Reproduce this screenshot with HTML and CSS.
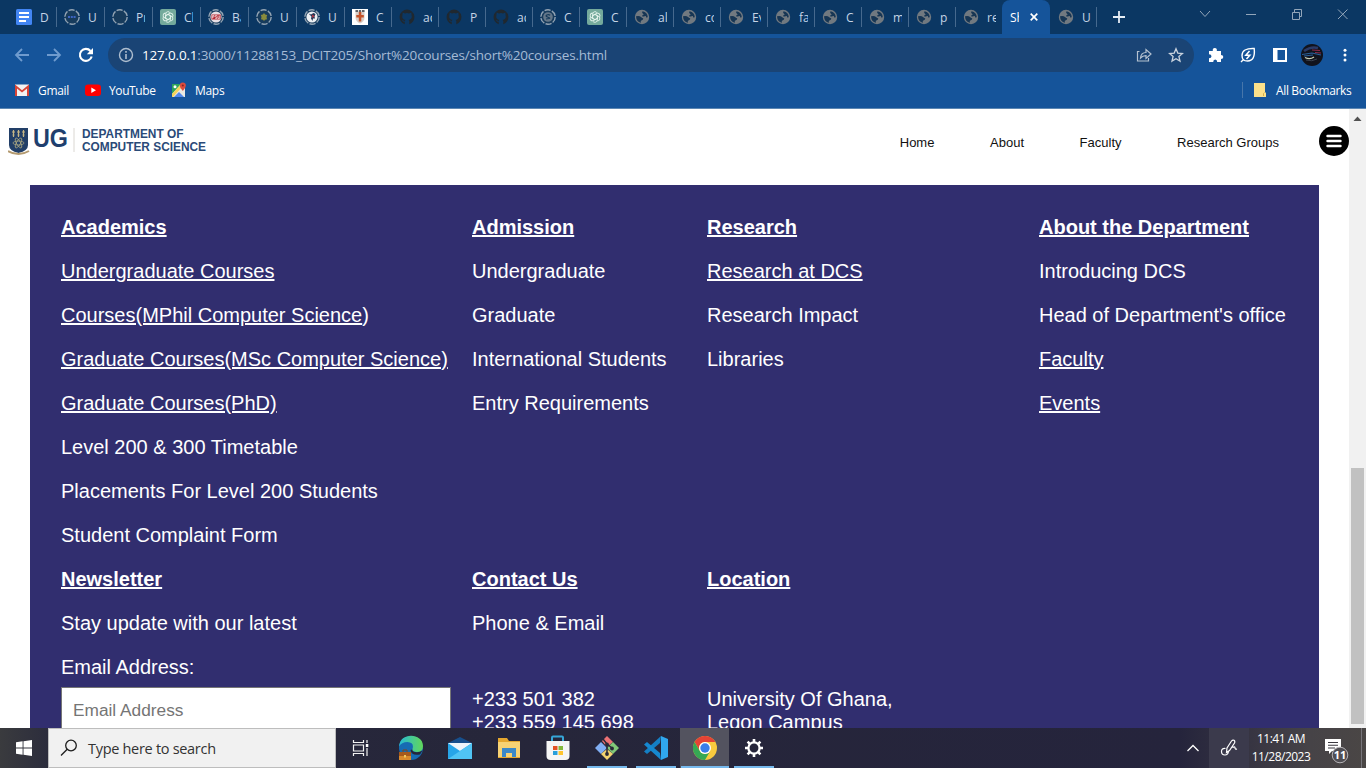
FILE: index.html
```
<!DOCTYPE html>
<html lang="en">
<head>
<meta charset="utf-8">
<title>Short courses</title>
<link rel="stylesheet" href="styles.css">
</head>
<body>
<svg class="defs" width="0" height="0" aria-hidden="true">
  <symbol id="globe" viewBox="0 0 16 16"><circle cx="8" cy="8" r="7.2" fill="#717980"/><path d="M2 7.300Q5.500 6.600 7 8t2.200 1.300Q9.500 11 7.800 11.300T7 13.800Q2.300 13 2 7.300ZM8.500 2.200Q7.500 4 9 4.800T8 6.700Q8.500 8 10.500 7.300T12 8.600L13.800 8.200Q13.500 3.200 8.500 2.200Z" fill="#173654"/></symbol>
  <symbol id="cat" viewBox="0 0 16 16"><path d="M8 .6A7.5 7.5 0 0 0 5.700 15.200V12.600C3.800 13 3.300 11.800 2.700 11.100L4.200 11.500 5.800 12 6.300 10.900C3.600 10.400 2.800 8.600 3.400 6.500L3.700 3.500 6 4.400Q8 3.800 10 4.400L12.300 3.500 12.600 6.500C13.200 8.600 12.400 10.400 9.700 10.900L10.300 12V15.200A7.500 7.500 0 0 0 8 .6Z" fill="#20282f"/></symbol>
  <symbol id="ring" viewBox="0 0 16 16"><circle cx="8" cy="8" r="7.200" fill="#173b5c" stroke="#92a3b3" stroke-width="1.400" stroke-dasharray="6.200 1.340"/></symbol>
  <symbol id="gpt" viewBox="0 0 16 16"><rect width="16" height="16" rx="2" fill="#74aa9c"/><g fill="none" stroke="#e5f4ed" stroke-width=".9"><path id="petal" d="M5.600 9.300V5.200a2.500 2.500 0 0 1 4.700-1.200M5.600 9.300L8 10.700"/><use href="#petal" transform="rotate(60 8 8)"/><use href="#petal" transform="rotate(120 8 8)"/><use href="#petal" transform="rotate(180 8 8)"/><use href="#petal" transform="rotate(240 8 8)"/><use href="#petal" transform="rotate(300 8 8)"/></g></symbol>
</svg>

<header class="chrome">
  <div class="tabs">
    <div class="tab wide first"><svg class="fav" viewBox="0 0 16 16"><rect width="16" height="16" rx="1.500" fill="#4285f4"/><path d="M3 4h10M3 8h10M3 12h7" stroke="#fff" stroke-width="1.800"/></svg><span>D</span></div>
    <div class="tab wide"><svg class="fav" viewBox="0 0 16 16"><use href="#ring"/><path d="M4 8h8" stroke="#3d65c4" stroke-width="2" stroke-dasharray="2 .8"/></svg><span>U</span></div>
    <div class="tab wide"><svg class="fav"><use href="#ring"/></svg><span>Pr</span></div>
    <div class="tab wide"><svg class="fav"><use href="#gpt"/></svg><span>Ch</span></div>
    <div class="tab wide"><svg class="fav" viewBox="0 0 16 16"><use href="#ring"/><circle cx="8" cy="8" r="5.600" fill="#e9dfe4"/><path d="M3.500 5.500h9.200v5H3.500z" fill="#b62934"/><path d="M4.500 9.500v-3h1.500v1.500H4.500M9 6.500H7.300V8h1.500v1.500H7.200M10 6.500v3h1.600v-3" fill="none" stroke="#fff" stroke-width=".6"/></svg><span>Ba</span></div>
    <div class="tab wide"><svg class="fav" viewBox="0 0 16 16"><use href="#ring"/><path d="M8 4l1.200 1.600 2 .3-.7 2 .5 2.300-2 .5L8 12l-1-1.300-2-.5.5-2.300-.7-2 2-.3z" fill="#898b3c"/></svg><span>U</span></div>
    <div class="tab wide"><svg class="fav" viewBox="0 0 16 16"><use href="#ring"/><circle cx="8" cy="8" r="5.600" fill="#edf0f4"/><path d="M4.500 4.500l2.500 1L9.500 4l2 1-1 2.500.5 2L9 9.500 8.500 12 7 9.500l.5-2z" fill="#243654"/><path d="M8 5.500l2.500 1.500-2 2z" fill="#c93643"/></svg><span>U</span></div>
    <div class="tab"><svg class="fav" viewBox="0 0 16 16"><path d="M0 0h16v16H0z" fill="#fff"/><path d="M3.500 1.500h9v7q0 4-4.500 6-4.500-2-4.500-6z" fill="#d9cfc8"/><path d="M6.800 3h2.500v3h2.500v2.600H9.300v3.800H6.800V8.600H4.300V6h2.500z" fill="#c45229"/><path d="M3.500 1.200h2.500v1.500H3.500zM7 1.200h2v1.500H7zM10 1.200h2.500v1.500H10z" fill="#333b44"/></svg><span>C</span></div>
    <div class="tab"><svg class="fav"><use href="#cat"/></svg><span>ac</span></div>
    <div class="tab"><svg class="fav"><use href="#cat"/></svg><span>P</span></div>
    <div class="tab"><svg class="fav"><use href="#cat"/></svg><span>ac</span></div>
    <div class="tab"><svg class="fav" viewBox="0 0 16 16"><use href="#ring"/><circle cx="8" cy="8" r="4.800" fill="#647789"/><path d="M10.200 6.200Q8.500 5 6.800 6T7.500 8t2.300 1.200T6 10" fill="none" stroke="#173b5c" stroke-width="1.200"/></svg><span>C</span></div>
    <div class="tab"><svg class="fav"><use href="#gpt"/></svg><span>C</span></div>
    <div class="tab"><svg class="fav"><use href="#globe"/></svg><span>al</span></div>
    <div class="tab"><svg class="fav"><use href="#globe"/></svg><span>co</span></div>
    <div class="tab"><svg class="fav"><use href="#globe"/></svg><span>Ev</span></div>
    <div class="tab"><svg class="fav"><use href="#globe"/></svg><span>fa</span></div>
    <div class="tab"><svg class="fav"><use href="#globe"/></svg><span>C</span></div>
    <div class="tab"><svg class="fav"><use href="#globe"/></svg><span>m</span></div>
    <div class="tab"><svg class="fav"><use href="#globe"/></svg><span>p</span></div>
    <div class="tab"><svg class="fav"><use href="#globe"/></svg><span>re</span></div>
    <div class="tab active"><span>Sh</span><svg width="8" height="8" viewBox="0 0 8 8"><path d="M.7.7l6.600 6.600M7.300.7L.7 7.300" stroke="#fff" stroke-width="1.700"/></svg></div>
    <div class="tab last"><svg class="fav"><use href="#globe"/></svg><span>U</span></div>
    <svg class="plus" width="12" height="12" viewBox="0 0 12 12"><path d="M6 0v12M0 6h12" stroke="#e6edf5" stroke-width="1.800"/></svg>
    <svg class="winbtns" width="150" height="12" viewBox="0 0 150 12" fill="none" stroke="#93a6ba"><path d="M1 3l5 5.500L11 3M47 6.500h10M93.500 4.500h7v7h-7zM95.500 4v-2.500h7v7h-2M139 1.500l9.500 9.500M148.500 1.500L139 11"/></svg>
  </div>
  <div class="toolbar">
    <svg class="navbtns" width="82" height="18" viewBox="0 0 82 18" fill="none" stroke-width="1.800"><path d="M15 9H2M8 3L2 9l6 6M33 9h13M40 3l6 6-6 6" stroke="#6f9bce"/><path d="M76.500 5A6 6 0 1 0 77.700 10.500" stroke="#fff" stroke-width="2.100"/><path d="M79 2v6.200h-6.200z" fill="#fff"/></svg>
    <div class="omnibox">
      <svg width="16" height="16" viewBox="0 0 16 16"><circle cx="8" cy="8" r="6.500" fill="none" stroke="#aebdce" stroke-width="1.400"/><path d="M8 7v5M8 4v1.700" stroke="#aebdce" stroke-width="1.600"/></svg>
      <div class="url"><b>127.0.0.1</b>:3000/11288153_DCIT205/Short%20courses/short%20courses.html</div>
      <svg class="share" width="16" height="16" viewBox="0 0 16 16" fill="none" stroke="#b4c1d0" stroke-width="1.200"><path d="M3.500 4.500H1.500v9.500h11v-3M4.500 11Q5 5.500 10 5.500V2.500L15 7l-5 4.500V8.700Q6.500 8.700 4.500 11z"/></svg>
      <svg width="16" height="16" viewBox="0 0 16 16" fill="none" stroke="#c9d2dd" stroke-width="1.300"><path d="M8 1.800l1.800 4.300 4.600.4-3.500 3 1.100 4.600L8 11.700l-4 2.400 1.100-4.600-3.500-3 4.600-.4z"/></svg>
    </div>
    <svg class="ext" width="16" height="16" viewBox="0 0 16 16"><path d="M1 4h3.800Q4.300 1 6.800 1T8.800 4H13v4q2.300 0 2.300 2T13 12v3H9.200q0-2.500-2-2.500t-2 2.500H1v-3.800q2.500 0 2.500-2T1 7.200z" fill="#fff"/></svg>
    <svg class="ext" width="16" height="16" viewBox="0 0 16 16" fill="none" stroke="#fff" stroke-width="1.400"><path d="M14.200 1.500Q15.500 14 7.500 14 2 14 2 8.500 2 1 14.200 1.500zM1 15l2-2"/><path d="M9.500 4L5.800 8.300h4L6.500 12" stroke-width="1.500"/></svg>
    <svg class="ext" width="16" height="16" viewBox="0 0 16 16"><path d="M1 1h14v14H1zM5.500 3v10H13V3z" fill="#fff" fill-rule="evenodd"/></svg>
    <svg class="avatar" width="22" height="22" viewBox="0 0 22 22"><circle cx="11" cy="11" r="11" fill="#11131c"/><path d="M3 7q7-5 14-3" stroke="#2b3a66" stroke-width="2.500" fill="none"/><path d="M11 6l8 .5M14 8.500l6 .5" stroke="#8e2c4b" stroke-width="1.200"/><path d="M1 10.500l10-1.500 9 2M3 12l9-1" stroke="#2a5f99" stroke-width="1.200" fill="none"/><path d="M4 13.500q5 2.500 9-.5" stroke="#c6cdb2" stroke-width="1.300" fill="none"/><path d="M5 16q6 2 11-1" stroke="#3b4351" fill="none"/></svg>
    <svg class="kebab" width="4" height="16" viewBox="0 0 4 16" fill="#fff"><circle cx="2" cy="3.200" r="1.500"/><circle cx="2" cy="8" r="1.500"/><circle cx="2" cy="13" r="1.500"/></svg>
  </div>
  <div class="bookmarks">
    <svg width="16" height="16" viewBox="0 0 16 16"><path d="M1 2.500h14v11.500H1z" fill="#f2f2f2"/><path d="M1 14V2.500l7 5.700 7-5.700V14h-2V6.500L8 10.500 3 6.500V14z" fill="#d84437"/></svg><span class="gmail">Gmail</span>
    <svg width="16" height="16" viewBox="0 0 16 16"><rect y="2.500" width="16" height="11.500" rx="3" fill="#f00"/><path d="M6.300 5.500v5.400L11 8.200z" fill="#fff"/></svg><span class="yt">YouTube</span>
    <svg width="16" height="16" viewBox="0 0 16 16"><path d="M1 2h13v13H1z" fill="#e9e9e2"/><path d="M1 2h9L1 12z" fill="#30a35a"/><path d="M1 12l9-10 2 2L2 15H1z" fill="#f7d45a"/><path d="M3 15l5-5 5 5z" fill="#4e87ed"/><circle cx="4" cy="4.800" r="1.500" fill="#fff"/><path d="M11.800 9Q8.800 5.500 8.800 3.500a3 3 0 0 1 6 0Q14.800 5.500 11.800 9z" fill="#dd4b3e"/><circle cx="11.800" cy="3.500" r="1" fill="#842620"/></svg><span class="maps">Maps</span>
    <i class="divider"></i>
    <svg class="folder" width="12" height="14" viewBox="0 0 12 14"><path d="M0 0h11v9l1 1v4H0z" fill="#fbe08a"/><path d="M9.500 13v-2.500l1-1" stroke="#d4ae48" fill="none"/></svg><span class="allb">All Bookmarks</span>
  </div>
</header>

<div class="viewport">
  <main class="page">
    <div class="sitebar">
      <svg class="logo" width="200" height="30" viewBox="0 0 200 30">
        <path d="M1 0h19v17q0 6-9.500 8Q1 23 1 17z" fill="#223f68"/>
        <path d="M5.500 2v7M10.500 2v7M15.500 2v7M4 4h3M9 4h3M14 4h3M4.500 7h2M9.500 7h2M14.500 7h2" stroke="#c7b786" stroke-width="1.200"/>
        <g fill="none" stroke="#aaa681" stroke-width=".8"><ellipse cx="10.500" cy="15" rx="5.500" ry="2"/><ellipse cx="10.500" cy="15" rx="5.500" ry="2" transform="rotate(60 10.500 15)"/><ellipse cx="10.500" cy="15" rx="5.500" ry="2" transform="rotate(120 10.500 15)"/></g>
        <path d="M0 23q5 3 10.500 3T21 23" stroke="#b39a70" stroke-width="2" fill="none"/>
        <text x="25" y="18.500" class="ug" textLength="35" lengthAdjust="spacingAndGlyphs">UG</text>
        <path d="M66 0v24" stroke="#dad7d2"/>
        <text x="74" y="9.500" class="dept" textLength="101.500" lengthAdjust="spacingAndGlyphs">DEPARTMENT OF</text>
        <text x="74" y="22.500" class="dept" textLength="124" lengthAdjust="spacingAndGlyphs">COMPUTER SCIENCE</text>
      </svg>
      <nav class="menu"><span>Home</span><span>About</span><span>Faculty</span><span>Research Groups</span></nav>
      <svg class="burger" width="30" height="30" viewBox="0 0 30 30"><circle cx="15" cy="15" r="15" fill="#000"/><path d="M8.500 10h13M8.500 15h13M8.500 20h13" stroke="#fff" stroke-width="2.400" stroke-linecap="round"/></svg>
    </div>
    <section class="links">
      <div class="row"><h3>Academics</h3><h3>Admission</h3><h3>Research</h3><h3>About the Department</h3></div>
      <div class="row"><u>Undergraduate Courses</u><span>Undergraduate</span><u>Research at DCS</u><span>Introducing DCS</span></div>
      <div class="row"><span><u>Courses(MPhil Computer Science</u>)</span><span>Graduate</span><span>Research Impact</span><span>Head of Department's office</span></div>
      <div class="row"><u>Graduate Courses(MSc Computer Science)</u><span>International Students</span><span>Libraries</span><u>Faculty</u></div>
      <div class="row"><u>Graduate Courses(PhD)</u><span>Entry Requirements</span><span></span><u>Events</u></div>
      <div class="row"><span>Level 200 &amp; 300 Timetable</span></div>
      <div class="row"><span>Placements For Level 200 Students</span></div>
      <div class="row"><span>Student Complaint Form</span></div>
      <div class="row"><h3>Newsletter</h3><h3>Contact Us</h3><h3>Location</h3></div>
      <div class="row"><span>Stay update with our latest</span><span>Phone &amp; Email</span></div>
      <div class="row label"><span>Email Address:</span></div>
      <div class="row form"><input type="email" placeholder="Email Address"><div>+233 501 382<br>+233 559 145 698</div><div>University Of Ghana,<br>Legon Campus</div></div>
    </section>
  </main>
  <div class="scroll"><svg width="9" height="5" viewBox="0 0 9 5"><path d="M.5 5l4-4.500 4 4.500z" fill="#505050"/></svg><div class="thumb"></div></div>
</div>

<footer class="taskbar">
  <div class="start"><svg width="16" height="16" viewBox="0 0 16 16" fill="#fff"><path d="M0 2.300L6.600 1.300V7.500H0zM7.500 1.200L16 0v7.500H7.500zM0 8.500h6.600v6.200L0 13.700zM7.500 8.500H16V16l-8.500-1.200z"/></svg></div>
  <div class="search"><svg width="18" height="18" viewBox="0 0 18 18" fill="none" stroke="#1d1d1d" stroke-width="1.300"><circle cx="11" cy="6.500" r="5.300"/><path d="M7.200 10.300L1 16.500"/></svg><span>Type here to search</span></div>
  <div class="app view"><svg width="18" height="16" viewBox="0 0 18 16" fill="none" stroke="#f2f2f2" stroke-width="1.200"><path d="M1.500 0v2.500h10V0M1.500 5h10v6h-10zM1.500 16v-2.500h10V16M15 0v3M15 8v8"/><path d="M13.800 4h2.500v3h-2.500z" fill="#fff" stroke="none"/></svg></div>
  <div class="app"><svg width="26" height="26" viewBox="0 0 26 26"><defs><linearGradient id="eg"><stop stop-color="#28bad5"/><stop offset="1" stop-color="#62d759"/></linearGradient></defs><circle cx="13" cy="13" r="12" fill="#176bb3"/><path d="M1 11.500C2-3.500 25-2 25 11q0 6-6 6-5.500 0-4.500-3 2-6.500-5-7Q3.500 7 1 11.500z" fill="url(#eg)"/><path d="M14.300 14.500q-.3 2.700 4.700 2.700 3 0 5.500-1.700l-2.500 4Q13 21 12.500 15z" fill="#26263a"/><path d="M1 17h12v8H1z" fill="#d98a2b"/><path d="M5 17v-2h4v2" fill="none" stroke="#824616"/><path d="M1 17h12v4H1z" fill="#a65a1c"/><path d="M6 20h2v2.500H6z" fill="#f2c75b"/></svg></div>
  <div class="app"><svg width="26" height="26" viewBox="0 0 26 26"><path d="M1 8l12-6 12 6v5H1z" fill="#174f8c"/><path d="M1 8h24v16H1z" fill="#27a5e8"/><path d="M1 8h24L13 16z" fill="#eef5fa"/><path d="M1 24L25 8v16z" fill="#50c4f4"/></svg></div>
  <div class="app"><svg width="24" height="24" viewBox="0 0 24 24"><path d="M1 2h9l2 3h11v17H1z" fill="#e5a72f"/><path d="M1 6h22v15H1z" fill="#f7d274"/><path d="M5 12h14v9h-4v-4H9v4H5z" fill="#3b88c8"/></svg></div>
  <div class="app"><svg width="26" height="26" viewBox="0 0 26 26"><path d="M7 7V2.500q0-1 1-1h9q1 0 1 1V7" fill="none" stroke="#36a6d8" stroke-width="2"/><path d="M1.500 6h23v15q0 4-4 4h-15q-4 0-4-4z" fill="#f5f5f5"/><path d="M8 11h4.500v4H8z" fill="#e35225"/><path d="M13.500 11H18v4h-4.500z" fill="#83b93b"/><path d="M8 16h4.500v4H8z" fill="#299fdb"/><path d="M13.500 16H18v4h-4.500z" fill="#ffc52e"/></svg></div>
  <div class="app run"><svg width="26" height="26" viewBox="0 0 26 26"><path d="M13 1l6 6-6 5-5-6z" fill="#ed7275"/><path d="M7 7l6 6-6 6-6-6z" fill="#80aef3"/><path d="M19 7l6 6-6 6-6-6z" fill="#82c878"/><path d="M13 14l6 5-6 6-6-6z" fill="#f3d36f"/><path d="M9 4l4 5v10M13 9l5 4" fill="none" stroke="#292937" stroke-width="1.500"/><circle cx="13" cy="9.500" r="1.900" fill="#292937"/><circle cx="18" cy="13.500" r="1.900" fill="#292937"/><circle cx="13" cy="19" r="1.900" fill="#292937"/></svg></div>
  <div class="app run"><svg width="26" height="26" viewBox="0 0 26 26"><path d="M18 1l-1 7L4 19l-3-2.500z" fill="#147fc5"/><path d="M18 25l-1-7L4 7 1 9.500z" fill="#1688d0"/><path d="M18 1l7 3v18l-7 3z" fill="#30a7ee"/></svg></div>
  <div class="app run current"><svg width="24" height="24" viewBox="0 0 24 24"><circle cx="12" cy="12" r="12" fill="#f9ca3e"/><path d="M1.600 6A12 12 0 0 1 22.400 6H12a6 6 0 0 0-5.200 9z" fill="#e44335"/><path d="M1.600 6A12 12 0 0 0 12 24l5.200-9a6 6 0 0 1-10.400 0z" fill="#36a854"/><circle cx="12" cy="12" r="6" fill="#fff"/><circle cx="12" cy="12" r="4.700" fill="#397ee9"/></svg></div>
  <div class="app run"><svg width="20" height="20" viewBox="0 0 20 20" fill="none" stroke="#fff"><circle cx="10" cy="10" r="5.600" stroke-width="2.300"/><path d="M10 1v3M10 16v3M1 10h3M16 10h3M3.600 3.600l2.200 2.200M14.200 14.200l2.200 2.200M3.600 16.400l2.200-2.200M14.200 5.800l2.200-2.200" stroke-width="2.600"/></svg></div>
  <div class="tray">
    <svg class="chev" width="14" height="8" viewBox="0 0 14 8"><path d="M1.500 7L7 1.500 12.500 7" fill="none" stroke="#fff" stroke-width="1.300"/></svg>
    <div class="pen"><svg width="18" height="18" viewBox="0 0 18 18" fill="none" stroke="#fff" stroke-width="1.200"><path d="M5.500 9.500Q1.500 9 1.500 12.500T5 16q3 0 3.500-3.500M6.500 13.500l.5-4.500 4.500-7q1.200-1.500 2.500-.7T14.500 4L9.500 11.500zM12.500 8.500q2.500-1.500 2.500.3t2 1.200"/></svg></div>
    <div class="clock"><span>11:41 AM</span><span>11/28/2023</span></div>
    <svg class="note" width="28" height="28" viewBox="0 0 28 28"><path d="M1 1h16v12H8l-3 3v-3H1z" fill="#fff"/><path d="M4 4.500h10M4 7.300h10M4 10h7" stroke="#3b3940" stroke-width="1.100"/><circle cx="16" cy="17" r="7.800" fill="#504e53" stroke="#b5b3b6"/><text x="16" y="21" text-anchor="middle">11</text></svg>
    <i class="peek"></i>
  </div>
</footer>
</body>
</html>
```
FILE: styles.css
```
* { box-sizing: border-box; }
body { margin: 0; width: 1366px; height: 768px; overflow: hidden; display: flex; flex-direction: column; background: #fff; font-family: "Open Sans", "Noto Sans", sans-serif; }
svg { display: block; flex: none; }
.defs { position: absolute; }

.chrome { height: 109px; background: #15549a; border-bottom: 1px solid #5c87b3; color: #fff; }
.tabs { height: 34px; background: #0b3763; display: flex; padding-left: 8px; }
.tab { width: 47px; height: 34px; display: flex; align-items: center; padding-left: 8px; gap: 8px; font-size: 12px; color: #c5d4e5; background: linear-gradient(#46698e, #46698e) left 7px / 1px 20px no-repeat; }
.tab.wide { width: 48px; }
.tab.first { background: none; }
.tab.last { background-position: right 7px; }
.tab span { width: 9px; overflow: hidden; white-space: nowrap; }
.fav { width: 16px; height: 16px; }
.tab.active { width: 48px; background: #15549a; border-radius: 8px 8px 0 0; color: #fff; gap: 11px; }
.plus { margin: 11px 0 0 16px; }
.winbtns { margin: 8px 0 0 74px; }

.toolbar { height: 42px; display: flex; align-items: center; }
.navbtns { margin-left: 14px; }
.omnibox { margin-left: 12px; width: 1086px; height: 34px; border-radius: 17px; background: #1a4475; display: flex; align-items: center; padding: 0 10px; }
.url { margin-left: 8px; font-size: 13.5px; color: #a5bbd5; white-space: nowrap; letter-spacing: -.18px; }
.url b { font-weight: 400; color: #fff; }
.share { margin: 0 16px 0 auto; }
.ext { margin-left: 14px; }
.ext + .ext { margin-left: 16px; }
.avatar { margin-left: 13px; }
.kebab { margin-left: 20px; }

.bookmarks { height: 28px; display: flex; align-items: center; padding-left: 14px; font-size: 12px; }
.bookmarks span { margin-left: 8px; white-space: nowrap; }
.gmail { width: 47px; letter-spacing: -.3px; }
.yt { width: 62px; letter-spacing: -.4px; }
.maps { letter-spacing: -.3px; }
.divider { margin-left: auto; width: 1px; height: 16px; background: #4776aa; }
.folder { margin-left: 11px; }
.bookmarks .allb { width: 90px; margin-left: 10px; letter-spacing: -.36px; }

.viewport { height: 619px; display: flex; overflow: hidden; }
.page { width: 1349px; font-family: "Liberation Sans", Arial, sans-serif; }
.sitebar { height: 76px; display: flex; padding-left: 8px; }
.logo { margin-top: 19px; }
.ug { font: bold 26px "Liberation Sans", Arial, sans-serif; fill: #1f3f6e; }
.dept { font: bold 13px "Liberation Sans", Arial, sans-serif; fill: #2a4a78; }
.menu { margin-left: auto; display: flex; gap: 55.6px; padding-top: 25px; font-size: 13px; line-height: 17px; color: #111; }
.burger { margin: 17px 0 0 40px; }
.links { margin: 0 30px; height: 543px; padding: 20px 0 0 31px; background: #312e6f; color: #fff; font-size: 20px; overflow: hidden; }
.row { display: grid; grid-template-columns: 411px 235px 332px auto; height: 44px; line-height: 44px; white-space: nowrap; }
.row h3 { margin: 0; font-size: 20px; text-decoration: underline; }
.row.label { height: 42px; }
.row.form { height: 60px; line-height: 23px; align-items: start; }
.form div { padding-top: 1px; }
.form input { width: 390px; height: 46px; border: 1px solid #767676; background: #fff; padding: 0 11px; font: 17.3px "Liberation Sans", Arial, sans-serif; }
.form input::placeholder { color: #757575; }
.scroll { width: 17px; background: #f1f1f1; display: flex; flex-direction: column; align-items: center; padding-top: 7px; }
.thumb { margin-top: 347px; width: 13px; height: 256px; background: #c1c1c1; }

.taskbar { height: 40px; display: flex; background: linear-gradient(90deg, #3a3b3e 0, #28293c 60px, #26263a 500px, #25243c 1180px, #464347 1310px, #4a4645 1366px); color: #fff; }
.start { width: 48px; display: flex; align-items: center; justify-content: center; }
.search { width: 288px; border: 1px solid #bdbdbd; background: #f1f1f1; display: flex; align-items: center; padding-left: 11px; color: #333; font-size: 14.5px; letter-spacing: -.3px; }
.search span { margin-left: 10px; }
.app { width: 49px; height: 40px; display: flex; align-items: center; justify-content: center; }
.app.view { width: 50px; }
.run { background: linear-gradient(#76b9ed, #76b9ed) center bottom / 40px 2px no-repeat; }
.run.current { background: linear-gradient(#76b9ed, #76b9ed) bottom / 48px 2px no-repeat, #53535f; }
.tray { margin-left: auto; display: flex; align-items: center; }
.chev { margin-right: 9px; }
.pen { width: 40px; height: 40px; background: #3b3a4c; display: flex; align-items: center; justify-content: center; }
.clock { width: 64px; display: flex; flex-direction: column; align-items: center; font-size: 12px; line-height: 18px; letter-spacing: -.5px; }
.note { margin: 8px 0 0 11px; }
.note text { font: bold 11px "Open Sans", sans-serif; fill: #fff; }
.peek { width: 1px; height: 40px; margin: 0 4px 0 9px; background: #77757a; }
```
